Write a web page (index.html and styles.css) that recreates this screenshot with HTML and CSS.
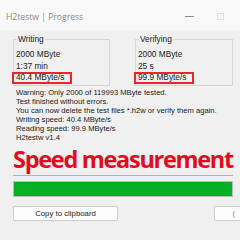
FILE: index.html
```html
<!DOCTYPE html>
<html lang="en">

<head>
    <meta charset="UTF-8">
    <meta name="viewport" content="width=device-width, initial-scale=1.0">
    <title>H2testw | Progress</title>
    <link rel="stylesheet" href="styles.css">
</head>

<body>

    <div class="titlebar">
        <span class="title">H2testw | Progress</span>
        <span class="ctl ctl-min"></span>
        <span class="ctl ctl-max"></span>
    </div>

    <div class="content">
        <div class="groups">
            <fieldset class="group">
                <legend>Writing</legend>
                <div class="line">2000 MByte</div>
                <div class="line">1:37 min</div>
                <div class="line"><span class="mark">40.4 MByte/s</span></div>
            </fieldset>
            <fieldset class="group">
                <legend>Verifying</legend>
                <div class="line">2000 MByte</div>
                <div class="line">25 s</div>
                <div class="line"><span class="mark">99.9 MByte/s</span></div>
            </fieldset>
        </div>

        <div class="log">
            <div>Warning: Only 2000 of 119993 MByte tested.</div>
            <div>Test finished without errors.</div>
            <div>You can now delete the test files *.h2w or verify them again.</div>
            <div>Writing speed: 40.4 MByte/s</div>
            <div>Reading speed: 99.9 MByte/s</div>
            <div>H2testw v1.4</div>
        </div>

        <div class="headline">Speed measurement</div>

        <div class="sep"></div>
        <div class="progress">
            <div class="bar" style="width: 100%"></div>
        </div>

        <div class="buttons">
            <button class="btn">Copy to clipboard</button>
            <button class="btn btn-close">(</button>
        </div>
    </div>

</body>

</html>
```

FILE: styles.css
```css
* {
    margin: 0;
    padding: 0;
    box-sizing: border-box;
}

body {
    width: 240px;
    height: 240px;
    overflow: hidden;
    background: #f0f0f0;
    font-family: "Liberation Sans", Arial, sans-serif;
    color: #1a1a1a;
}

/* title bar */
.titlebar {
    height: 30px;
    background: #f9f9f9;
    display: flex;
    align-items: center;
    padding: 3px 0 0 6px;
}

.title {
    font-family: "Open Sans", sans-serif;
    font-size: 8.6px;
    color: #8a8a8a;
    flex: 1;
}

.ctl {
    display: block;
}

.ctl-min {
    width: 9px;
    height: 1px;
    background: #8c8c8c;
    margin-right: 23px;
}

.ctl-max {
    width: 7px;
    height: 7px;
    border: 1px solid #e0e0e0;
    margin-right: 16px;
}

.content {
    padding: 0 7px 0 13px;
}

/* group boxes */
.groups {
    display: flex;
    justify-content: space-between;
    margin-top: 4px;
}

.group {
    width: 97px;
    height: 52px;
    border: 1px solid #d6d6d6;
    padding: 5px 0 0 2px;
    font-size: 8.3px;
}

.group:last-child {
    width: 98px;
}

.group legend {
    margin-left: 1px;
    padding: 0 1px;
    line-height: 10px;
}

.line {
    line-height: 11.6px;
    white-space: nowrap;
}

.mark {
    display: inline-block;
    margin-left: -4px;
    padding: 0 6px 0 2px;
    border: 2px solid #e8262b;
    line-height: 7.6px;
}

/* result text */
.log {
    margin-top: 2px;
    font-size: 7.6px;
    line-height: 9.1px;
    padding-left: 3px;
    white-space: nowrap;
}

.headline {
    font-family: "Open Sans", sans-serif;
    font-weight: 700;
    font-size: 23.5px;
    line-height: 22px;
    color: #e30b1f;
    letter-spacing: -1.3px;
    white-space: nowrap;
    margin-top: 5px;
}

.sep {
    height: 1px;
    background: #b0b0b0;
    width: 220px;
    margin-top: 5px;
}

.progress {
    width: 220px;
    height: 16px;
    margin-top: 5px;
    border: 1px solid #bcbcbc;
    background: #e6e6e6;
}

.bar {
    height: 100%;
    background: #06b025;
}

.buttons {
    display: flex;
    gap: 96px;
    margin-top: 9px;
}

.btn {
    flex: none;
    width: 105px;
    height: 15px;
    background: #fdfdfd;
    border: 1px solid #d0d0d0;
    border-radius: 2px;
    box-shadow: 0 0 0 1px #ececec;
    font-family: "Liberation Sans", Arial, sans-serif;
    font-size: 7.8px;
    color: #1a1a1a;
}

.btn-close {
    width: 32px;
    text-align: right;
    padding-right: 10px;
    color: #b08040;
}
```
